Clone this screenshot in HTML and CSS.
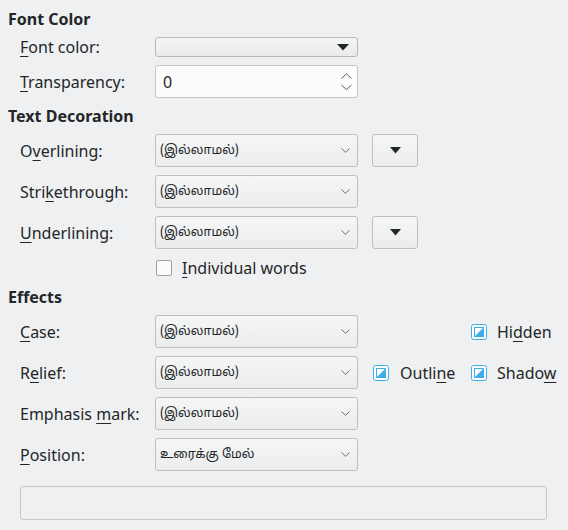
FILE: index.html
```html
<!DOCTYPE html>
<html>
<head>
<meta charset="utf-8">
<link rel="stylesheet" href="styles.css">
</head>
<body>
<div class="page">
  <h2 class="heading">Font Color</h2>
  <div class="grid">
    <span class="lbl"><u>F</u>ont color:</span>
    <div class="colorbtn"><svg width="12" height="7" viewBox="0 0 12 7"><polygon points="0,0 12,0 6,6.5" fill="#232629"/></svg></div>
    <span class="lbl"><u>T</u>ransparency:</span>
    <div class="spin"><span>0</span><svg width="11" height="18" viewBox="0 0 11 18"><polyline points="0.5,5.5 5.5,0.8 10.5,5.5" fill="none" stroke="#555a5f" stroke-width="1"/><polyline points="0.5,12 5.5,16.7 10.5,12" fill="none" stroke="#555a5f" stroke-width="1"/></svg></div>
  </div>

  <h2 class="heading">Text Decoration</h2>
  <div class="grid">
    <span class="lbl">O<u>v</u>erlining:</span>
    <div class="combo"><span class="ta">(இல்லாமல்)</span><svg class="chev" width="9" height="5" viewBox="0 0 9 5"><polyline points="0.5,0.5 4.5,4.3 8.5,0.5" fill="none" stroke="#6b6f73" stroke-width="1"/></svg></div>
    <div class="smallbtn"><svg width="11" height="7" viewBox="0 0 11 7"><polygon points="0,0 11,0 5.5,6.5" fill="#232629"/></svg></div>

    <span class="lbl">Stri<u>k</u>ethrough:</span>
    <div class="combo"><span class="ta">(இல்லாமல்)</span><svg class="chev" width="9" height="5" viewBox="0 0 9 5"><polyline points="0.5,0.5 4.5,4.3 8.5,0.5" fill="none" stroke="#6b6f73" stroke-width="1"/></svg></div>
    <span class="empty"></span>

    <span class="lbl"><u>U</u>nderlining:</span>
    <div class="combo"><span class="ta">(இல்லாமல்)</span><svg class="chev" width="9" height="5" viewBox="0 0 9 5"><polyline points="0.5,0.5 4.5,4.3 8.5,0.5" fill="none" stroke="#6b6f73" stroke-width="1"/></svg></div>
    <div class="smallbtn"><svg width="11" height="7" viewBox="0 0 11 7"><polygon points="0,0 11,0 5.5,6.5" fill="#232629"/></svg></div>

    <span class="empty"></span>
    <label class="check check-indiv"><span class="box"></span><span><u>I</u>ndividual words</span></label>
  </div>

  <h2 class="heading">Effects</h2>
  <div class="grid">
    <span class="lbl"><u>C</u>ase:</span>
    <div class="combo"><span class="ta">(இல்லாமல்)</span><svg class="chev" width="9" height="5" viewBox="0 0 9 5"><polyline points="0.5,0.5 4.5,4.3 8.5,0.5" fill="none" stroke="#6b6f73" stroke-width="1"/></svg></div>
    <span class="empty"></span>
    <label class="check"><svg class="tri" width="16" height="16" viewBox="0 0 16 16"><rect x="0.5" y="0.5" width="15" height="15" rx="2" fill="#fcfcfc" stroke="#3daee9"/><rect x="3.5" y="3.5" width="9" height="9" fill="none" stroke="#3daee9"/><polygon points="4,12 12,12 12,4" fill="#3daee9"/></svg><span>Hi<u>d</u>den</span></label>

    <span class="lbl">R<u>e</u>lief:</span>
    <div class="combo"><span class="ta">(இல்லாமல்)</span><svg class="chev" width="9" height="5" viewBox="0 0 9 5"><polyline points="0.5,0.5 4.5,4.3 8.5,0.5" fill="none" stroke="#6b6f73" stroke-width="1"/></svg></div>
    <label class="check check-outline"><svg class="tri" width="16" height="16" viewBox="0 0 16 16"><rect x="0.5" y="0.5" width="15" height="15" rx="2" fill="#fcfcfc" stroke="#3daee9"/><rect x="3.5" y="3.5" width="9" height="9" fill="none" stroke="#3daee9"/><polygon points="4,12 12,12 12,4" fill="#3daee9"/></svg><span>Outli<u>n</u>e</span></label>
    <label class="check"><svg class="tri" width="16" height="16" viewBox="0 0 16 16"><rect x="0.5" y="0.5" width="15" height="15" rx="2" fill="#fcfcfc" stroke="#3daee9"/><rect x="3.5" y="3.5" width="9" height="9" fill="none" stroke="#3daee9"/><polygon points="4,12 12,12 12,4" fill="#3daee9"/></svg><span>Shado<u>w</u></span></label>

    <span class="lbl">Emphasis <u>m</u>ark:</span>
    <div class="combo"><span class="ta">(இல்லாமல்)</span><svg class="chev" width="9" height="5" viewBox="0 0 9 5"><polyline points="0.5,0.5 4.5,4.3 8.5,0.5" fill="none" stroke="#6b6f73" stroke-width="1"/></svg></div>
    <span class="empty"></span>
    <span class="empty"></span>

    <span class="lbl"><u>P</u>osition:</span>
    <div class="combo"><span class="ta">உரைக்கு மேல்</span><svg class="chev" width="9" height="5" viewBox="0 0 9 5"><polyline points="0.5,0.5 4.5,4.3 8.5,0.5" fill="none" stroke="#6b6f73" stroke-width="1"/></svg></div>
  </div>

  <div class="preview"></div>
</div>
</body>
</html>
```

FILE: styles.css
```css
html, body {
  margin: 0;
  background: #eff0f1;
}
body {
  font-family: "Noto Sans", "DejaVu Sans", sans-serif;
  font-size: 16px;
  color: #232629;
}
.page {
  display: flex;
  flex-direction: column;
  gap: 8px;
  padding: 9px 0 0 8px;
}
.heading {
  margin: 0;
  font-size: 16px;
  font-weight: bold;
  line-height: 20px;
}
.grid {
  display: grid;
  grid-template-columns: 135px 203px 113px auto;
  row-gap: 8px;
  margin-left: 12px;
  align-items: center;
}
.lbl {
  grid-column: 1;
  white-space: nowrap;
  line-height: 20px;
}
u {
  text-decoration-thickness: 1px;
  text-underline-offset: 3px;
}
.colorbtn {
  grid-column: 2 / span 3;
  width: 203px;
  height: 20px;
  box-sizing: border-box;
  border: 1px solid #b7b9bb;
  border-radius: 3px;
  background: linear-gradient(#f4f5f5, #e9eaeb);
  display: flex;
  align-items: center;
  justify-content: flex-end;
  padding-right: 8px;
}
.spin {
  grid-column: 2;
  height: 33px;
  box-sizing: border-box;
  border: 1px solid #c3c5c7;
  border-radius: 3px;
  background: #fcfcfc;
  display: flex;
  align-items: center;
  justify-content: space-between;
  padding: 0 5px 0 7px;
}
.combo {
  grid-column: 2;
  height: 33px;
  box-sizing: border-box;
  border: 1px solid #bcbebf;
  border-radius: 3px;
  background: linear-gradient(#f5f6f6, #ebeced);
  display: flex;
  align-items: center;
  justify-content: space-between;
  padding: 0 7px 0 4px;
}
.ta {
  font-family: "Noto Sans Tamil", "Lohit Tamil", "Noto Sans", sans-serif;
  font-size: 12.5px;
}
.smallbtn {
  grid-column: 3;
  justify-self: start;
  margin-left: 14px;
  width: 46px;
  height: 33px;
  box-sizing: border-box;
  border: 1px solid #bcbebf;
  border-radius: 3px;
  background: linear-gradient(#f5f6f6, #ebeced);
  display: flex;
  align-items: center;
  justify-content: center;
}
.empty {
  min-height: 1px;
}
.check {
  display: flex;
  align-items: center;
  gap: 10px;
  white-space: nowrap;
  line-height: 22px;
}
.check-indiv {
  grid-column: 2 / span 3;
  margin-left: 1px;
}
.check-outline {
  margin-left: 15px;
  gap: 11px;
}
.box {
  width: 16px;
  height: 16px;
  box-sizing: border-box;
  border: 1px solid #9a9c9e;
  border-radius: 2px;
  background: #fcfcfc;
}
.tri {
  flex: none;
}
.preview {
  margin: 7px 0 0 12px;
  width: 527px;
  height: 34px;
  box-sizing: border-box;
  border: 1px solid #c4c6c8;
  border-radius: 3px;
  background: #eff0f1;
}
```
